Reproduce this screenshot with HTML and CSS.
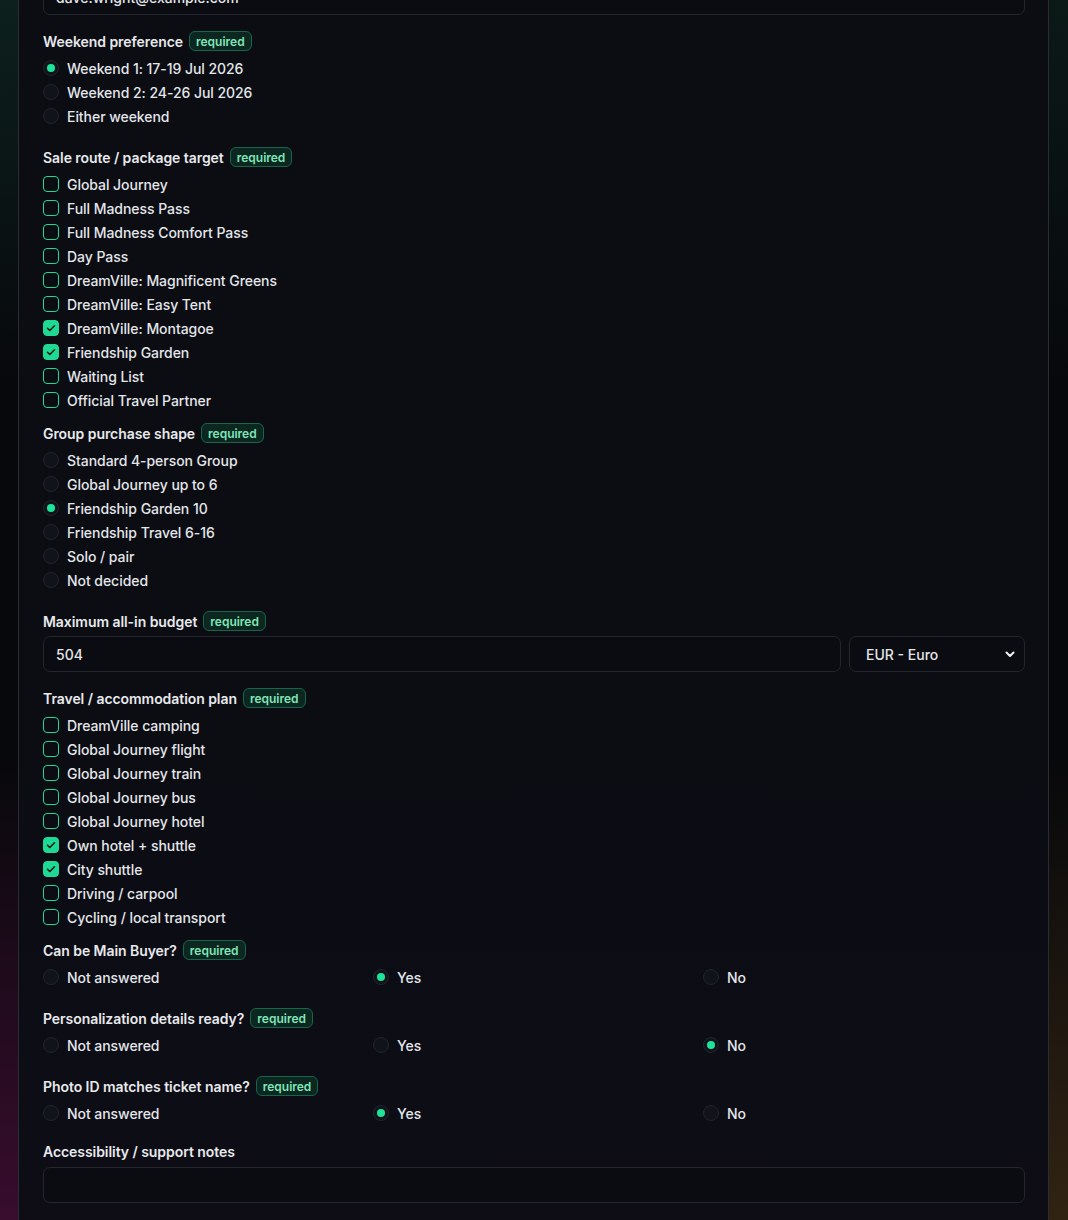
FILE: index.html
```html
<!DOCTYPE html>
<html lang="en">
<head>
<meta charset="utf-8">
<title>Registration form</title>
<link rel="stylesheet" href="styles.css">
</head>
<body>
<main class="page">
  <form class="card">
    <div class="field field-input">
      <div class="label-row"><span class="label">Email</span><span class="badge">required</span></div>
      <input class="text-input" type="text" value="dave.wright@example.com">
    </div>

    <div class="field field-radio">
      <div class="label-row"><span class="label">Weekend preference</span><span class="badge">required</span></div>
      <div class="options">
        <label class="opt"><span class="radio checked"></span>Weekend 1: 17-19 Jul 2026</label>
        <label class="opt"><span class="radio"></span>Weekend 2: 24-26 Jul 2026</label>
        <label class="opt"><span class="radio"></span>Either weekend</label>
      </div>
    </div>

    <div class="field field-check">
      <div class="label-row"><span class="label">Sale route / package target</span><span class="badge">required</span></div>
      <div class="options">
        <label class="opt"><span class="check"></span>Global Journey</label>
        <label class="opt"><span class="check"></span>Full Madness Pass</label>
        <label class="opt"><span class="check"></span>Full Madness Comfort Pass</label>
        <label class="opt"><span class="check"></span>Day Pass</label>
        <label class="opt"><span class="check"></span>DreamVille: Magnificent Greens</label>
        <label class="opt"><span class="check"></span>DreamVille: Easy Tent</label>
        <label class="opt"><span class="check checked"><svg viewBox="0 0 16 16"><path d="M4 8.3l2.6 2.5L12 5.4"/></svg></span>DreamVille: Montagoe</label>
        <label class="opt"><span class="check checked"><svg viewBox="0 0 16 16"><path d="M4 8.3l2.6 2.5L12 5.4"/></svg></span>Friendship Garden</label>
        <label class="opt"><span class="check"></span>Waiting List</label>
        <label class="opt"><span class="check"></span>Official Travel Partner</label>
      </div>
    </div>

    <div class="field field-radio">
      <div class="label-row"><span class="label">Group purchase shape</span><span class="badge">required</span></div>
      <div class="options">
        <label class="opt"><span class="radio"></span>Standard 4-person Group</label>
        <label class="opt"><span class="radio"></span>Global Journey up to 6</label>
        <label class="opt"><span class="radio checked"></span>Friendship Garden 10</label>
        <label class="opt"><span class="radio"></span>Friendship Travel 6-16</label>
        <label class="opt"><span class="radio"></span>Solo / pair</label>
        <label class="opt"><span class="radio"></span>Not decided</label>
      </div>
    </div>

    <div class="field field-budget">
      <div class="label-row"><span class="label">Maximum all-in budget</span><span class="badge">required</span></div>
      <div class="budget-row">
        <input class="text-input" type="text" value="504">
        <div class="select">
          <span>EUR - Euro</span>
          <svg viewBox="0 0 12 12"><path d="M2.5 4.5L6 8l3.5-3.5"/></svg>
        </div>
      </div>
    </div>

    <div class="field field-check">
      <div class="label-row"><span class="label">Travel / accommodation plan</span><span class="badge">required</span></div>
      <div class="options">
        <label class="opt"><span class="check"></span>DreamVille camping</label>
        <label class="opt"><span class="check"></span>Global Journey flight</label>
        <label class="opt"><span class="check"></span>Global Journey train</label>
        <label class="opt"><span class="check"></span>Global Journey bus</label>
        <label class="opt"><span class="check"></span>Global Journey hotel</label>
        <label class="opt"><span class="check checked"><svg viewBox="0 0 16 16"><path d="M4 8.3l2.6 2.5L12 5.4"/></svg></span>Own hotel + shuttle</label>
        <label class="opt"><span class="check checked"><svg viewBox="0 0 16 16"><path d="M4 8.3l2.6 2.5L12 5.4"/></svg></span>City shuttle</label>
        <label class="opt"><span class="check"></span>Driving / carpool</label>
        <label class="opt"><span class="check"></span>Cycling / local transport</label>
      </div>
    </div>

    <div class="field field-radio">
      <div class="label-row"><span class="label">Can be Main Buyer?</span><span class="badge">required</span></div>
      <div class="options tri">
        <label class="opt"><span class="radio"></span>Not answered</label>
        <label class="opt"><span class="radio checked"></span>Yes</label>
        <label class="opt"><span class="radio"></span>No</label>
      </div>
    </div>

    <div class="field field-radio">
      <div class="label-row"><span class="label">Personalization details ready?</span><span class="badge">required</span></div>
      <div class="options tri">
        <label class="opt"><span class="radio"></span>Not answered</label>
        <label class="opt"><span class="radio"></span>Yes</label>
        <label class="opt"><span class="radio checked"></span>No</label>
      </div>
    </div>

    <div class="field field-last-radio">
      <div class="label-row"><span class="label">Photo ID matches ticket name?</span><span class="badge">required</span></div>
      <div class="options tri">
        <label class="opt"><span class="radio"></span>Not answered</label>
        <label class="opt"><span class="radio checked"></span>Yes</label>
        <label class="opt"><span class="radio"></span>No</label>
      </div>
    </div>

    <div class="field field-input">
      <div class="label-row plain"><span class="label">Accessibility / support notes</span></div>
      <div class="text-input notes"></div>
    </div>
  </form>
</main>
</body>
</html>
```

FILE: styles.css
```css
* { box-sizing: border-box; }

html, body {
  margin: 0;
  padding: 0;
}

body {
  min-height: 1220px;
  font-family: Inter, "Noto Sans", "Liberation Sans", sans-serif;
  color: #e4e6ea;
  background-color: #07080b;
  background-image:
    radial-gradient(ellipse 60% 40% at 0% 100%, rgba(74, 14, 58, 0.8), rgba(74, 14, 58, 0) 100%),
    radial-gradient(ellipse 55% 40% at 100% 100%, rgba(72, 50, 22, 0.7), rgba(72, 50, 22, 0) 100%),
    radial-gradient(ellipse 60% 30% at 0% 0%, rgba(14, 38, 34, 0.8), rgba(14, 38, 34, 0) 100%),
    radial-gradient(ellipse 60% 30% at 100% 0%, rgba(12, 32, 28, 0.7), rgba(12, 32, 28, 0) 100%);
  overflow: hidden;
}

.page {
  padding: 0 19px 0 18px;
}

.card {
  margin-top: -72px;
  border: 1px solid #2a2d33;
  border-radius: 12px;
  padding: 24px 23px 40px 24px;
  background: linear-gradient(180deg, #0b0d13 0%, #0b0d13 60%, #0e0d16 100%);
}

.field { margin-bottom: 16px; }
.field-check { margin-bottom: 11px; }
.field-radio { margin-bottom: 19px; }
.field-budget { margin-bottom: 16px; }
.field-last-radio { margin-bottom: 16px; }

.label-row {
  display: flex;
  align-items: center;
  gap: 6px;
  height: 20px;
}
.label-row.plain { height: 20px; }

.label {
  font-size: 14px;
  font-weight: 600;
  letter-spacing: -0.06px;
  color: #e8e9ec;
}

.badge {
  display: inline-flex;
  align-items: center;
  height: 20px;
  padding: 0 6px;
  font-size: 12px;
  font-weight: 600;
  color: #7fe6b9;
  background: #0b2720;
  border: 1px solid #17654b;
  border-radius: 6px;
}

.options {
  margin-top: 5px;
  display: flex;
  flex-direction: column;
}

.options.tri {
  display: grid;
  grid-template-columns: repeat(3, 1fr);
  column-gap: 8px;
}

.opt {
  display: flex;
  align-items: center;
  gap: 8px;
  height: 24px;
  font-size: 14px;
  font-weight: 500;
  letter-spacing: -0.05px;
  color: #e4e6ea;
}

.radio {
  flex: none;
  width: 16px;
  height: 16px;
  border-radius: 50%;
  background: #11131a;
  border: 1px solid #22252c;
  display: flex;
  align-items: center;
  justify-content: center;
}
.radio.checked::after {
  content: "";
  width: 8px;
  height: 8px;
  border-radius: 50%;
  background: #1ee39a;
}

.check {
  flex: none;
  width: 16px;
  height: 16px;
  border-radius: 4px;
  border: 1.5px solid #1fd894;
  background: transparent;
  display: flex;
  align-items: center;
  justify-content: center;
}
.check.checked {
  background: #1fd894;
  border-color: #1fd894;
}
.check svg {
  width: 14px;
  height: 14px;
  fill: none;
  stroke: #06140f;
  stroke-width: 1.6;
  stroke-linecap: round;
  stroke-linejoin: round;
}

.text-input {
  display: block;
  width: 100%;
  height: 36px;
  margin-top: 6px;
  padding: 0 12px;
  font-family: inherit;
  font-size: 14px;
  font-weight: 500;
  color: #e4e6ea;
  background: #0a0c11;
  border: 1px solid #23262d;
  border-radius: 7px;
  outline: none;
}

.budget-row {
  display: flex;
  gap: 8px;
  margin-top: 5px;
}
.budget-row .text-input {
  margin-top: 0;
  flex: 1;
}

.select {
  flex: none;
  width: 176px;
  height: 36px;
  display: flex;
  align-items: center;
  justify-content: space-between;
  padding: 0 8px 0 16px;
  font-size: 14px;
  font-weight: 500;
  color: #e4e6ea;
  background: #0a0c11;
  border: 1px solid #23262d;
  border-radius: 7px;
}
.select svg {
  width: 12px;
  height: 12px;
  fill: none;
  stroke: #f2f2f2;
  stroke-width: 2;
  stroke-linecap: round;
  stroke-linejoin: round;
}

.notes {
  margin-top: 6px;
}
```
